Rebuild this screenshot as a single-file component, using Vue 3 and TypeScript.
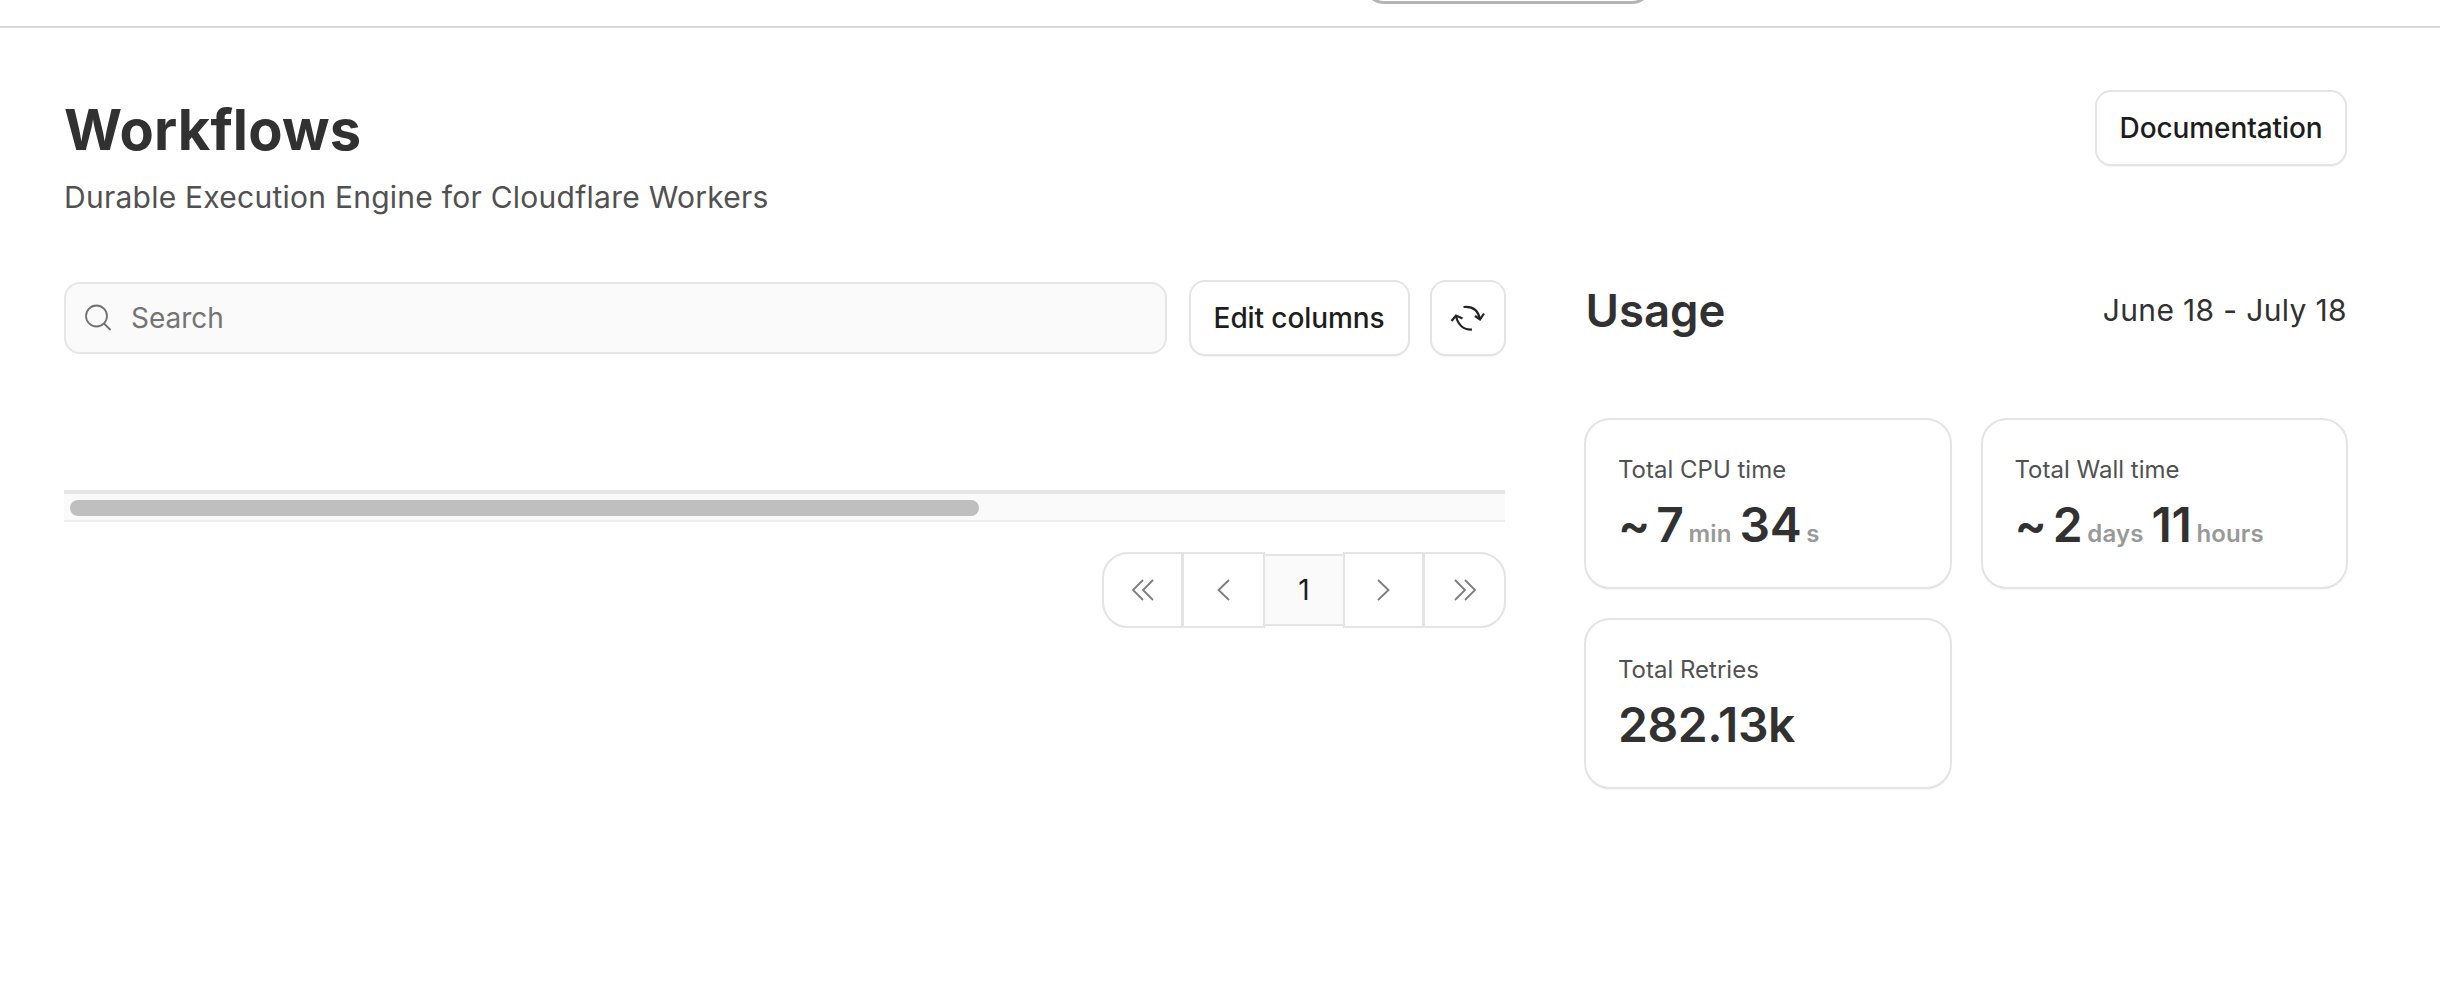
<script setup lang="ts">
interface Part { value: string; unit?: string }
interface Card { label: string; prefix?: string; parts: Part[] }
const cards: Card[] = [
  { label: 'Total CPU time', prefix: '~', parts: [{ value: '7', unit: 'min' }, { value: '34', unit: 's' }] },
  { label: 'Total Wall time', prefix: '~', parts: [{ value: '2', unit: 'days' }, { value: '11', unit: 'hours' }] },
  { label: 'Total Retries', parts: [{ value: '282.13k' }] },
]
</script>

<template>
  <div class="page">
    <div class="topbar"><div class="pill"></div></div>
    <main class="content">
      <header class="head">
        <div>
          <h1>Workflows</h1>
          <p>Durable Execution Engine for Cloudflare Workers</p>
        </div>
        <button class="btn doc">Documentation</button>
      </header>
      <div class="columns">
        <section class="left">
          <div class="toolbar">
            <label class="search">
              <svg width="28" height="28" viewBox="0 0 28 28" fill="none" stroke="#707070" stroke-width="1.8"><circle cx="12.500" cy="12" r="10.500"/><path d="M20 19.500l6.500 6.500"/></svg>
              <span>Search</span>
            </label>
            <button class="btn edit">Edit columns</button>
            <button class="btn refresh" aria-label="Refresh">
              <svg width="40" height="40" viewBox="0 0 40 40" fill="none" stroke="#222" stroke-width="2.200">
                <path d="M15.500 9C24 8 30 12 32 21"/>
                <path d="M27 18l5 3.500 4-6"/>
                <path d="M24 31.500C16 32 10 27 8 18"/>
                <path d="M3.500 23L8 17.500l6.500 3"/>
              </svg>
            </button>
          </div>
          <div class="scrolltrack"><div class="thumb"></div></div>
          <nav class="pager">
            <button class="pg first"><svg width="22" height="22" viewBox="0 0 22 22" fill="none" stroke="#7c7c7c" stroke-width="1.800"><path d="M11 1L1 11l10 10M21 1L11 11l10 10"/></svg></button>
            <button class="pg prev"><svg width="13" height="22" viewBox="0 0 13 22" fill="none" stroke="#7c7c7c" stroke-width="1.800"><path d="M12 1L1.500 11 12 21"/></svg></button>
            <span class="pg current">1</span>
            <button class="pg next"><svg width="13" height="22" viewBox="0 0 13 22" fill="none" stroke="#7c7c7c" stroke-width="1.800"><path d="M1 1l10.500 10L1 21"/></svg></button>
            <button class="pg last"><svg width="22" height="22" viewBox="0 0 22 22" fill="none" stroke="#7c7c7c" stroke-width="1.800"><path d="M1 1l10 10L1 21M11 1l10 10-10 10"/></svg></button>
          </nav>
        </section>
        <aside class="right">
          <div class="usage-head">
            <h2>Usage</h2>
            <span>June 18 - July 18</span>
          </div>
          <div class="cards">
            <div v-for="c in cards" :key="c.label" class="card">
              <div class="label">{{ c.label }}</div>
              <div class="value">
                <span v-if="c.prefix" class="prefix">{{ c.prefix }}</span>
                <template v-for="p in c.parts" :key="p.value">
                  <span class="num">{{ p.value }}</span><span v-if="p.unit" class="unit">{{ p.unit }}</span>
                </template>
              </div>
            </div>
          </div>
        </aside>
      </div>
    </main>
  </div>
</template>

<style>
html, body { margin: 0; background: #fff; }
</style>

<style scoped>
.page { height: 994px; overflow: hidden; background: #fff; font-family: Inter, "Liberation Sans", sans-serif; color: #313131; }
.topbar { height: 26px; border-bottom: 2px solid #d9d9d9; padding-left: 1364px; overflow: hidden; }
.pill { width: 288px; height: 40px; box-sizing: border-box; margin-top: -36px; border: 3px solid #b4b4b4; border-radius: 28px; }
.content { padding: 68px 93px 0 64px; }
.head { display: flex; justify-content: space-between; align-items: flex-start; }
h1 { margin: 0; font-size: 56px; line-height: 68px; font-weight: 700; color: #313131; letter-spacing: .15px; }
.head p { margin: 13px 0 0; font-size: 30px; line-height: 40px; color: #515151; letter-spacing: .25px; }
button { font-family: inherit; cursor: pointer; }
.btn { background: #fff; border: 2px solid #e4e4e4; border-radius: 16px; color: #1d1d1d; font-size: 28px; font-weight: 500; letter-spacing: -.1px; box-shadow: 0 1px 1px rgba(0,0,0,.04); }
.doc { margin-top: -6px; width: 252px; height: 76px; padding: 0; }
.columns { display: flex; margin-top: 63px; gap: 78px; }
.left { width: 1442px; flex: none; }
.toolbar { display: flex; align-items: center; gap: 22px; }
.search { flex: 1; height: 72px; box-sizing: border-box; display: flex; align-items: center; gap: 19px; padding: 0 18px; background: #fafafa; border: 2px solid #e6e6e6; border-radius: 16px; color: #747474; font-size: 28px; }
.edit { width: 221px; height: 76px; padding: 0; }
.refresh { width: 76px; height: 76px; margin-left: -1.500px; padding: 0; display: flex; align-items: center; justify-content: center; }
.scrolltrack { margin-top: 134px; margin-right: 1px; height: 32px; box-sizing: border-box; background: #fafafa; border-top: 4px solid #e6e6e6; border-bottom: 2px solid #eee; padding: 6px 6px 0; }
.thumb { width: 909px; height: 16px; border-radius: 8px; background: #bfbfbf; }
.pager { display: flex; justify-content: flex-end; margin-top: 30px; }
.pg { height: 76px; box-sizing: border-box; background: #fff; border: 2px solid #e4e4e4; display: flex; align-items: center; justify-content: center; padding: 0; }
.first { width: 81px; border-radius: 26px 0 0 26px; }
.prev { width: 83px; margin-left: -1px; }
.next { width: 81px; }
.last { width: 83px; margin-left: -1px; border-radius: 0 26px 26px 0; }
.current { width: 78px; height: 72px; margin-top: 2px; border-left: 0; border-right: 0; background: #fafafa; font-size: 28px; color: #1d1d1d; }
.right { flex: 1; }
.usage-head { display: flex; justify-content: space-between; align-items: center; height: 52px; margin-top: 4px; }
h2 { margin: 0 0 0 1.500px; font-size: 45.500px; font-weight: 600; color: #313131; }
.usage-head span { font-size: 30px; color: #313131; letter-spacing: .35px; }
.cards { display: grid; grid-template-columns: 1fr 1fr; gap: 29px; margin: 82px -1px 0 0; }
.card { height: 171px; box-sizing: border-box; padding: 35px 32px 0; border: 2px solid #e4e4e4; border-radius: 26px; box-shadow: 0 1px 1px rgba(0,0,0,.04); }
.label { font-size: 24px; line-height: 30px; color: #515151; }
.value { display: flex; align-items: baseline; margin-top: 10px; line-height: 60px; font-size: 48px; font-weight: 600; color: #313131; }
.prefix { margin-right: 6px; }
.num { letter-spacing: -.4px; }
.num + .unit { margin-left: 5px; margin-right: 8px; font-size: 24px; letter-spacing: .15px; color: #999; }
</style>
